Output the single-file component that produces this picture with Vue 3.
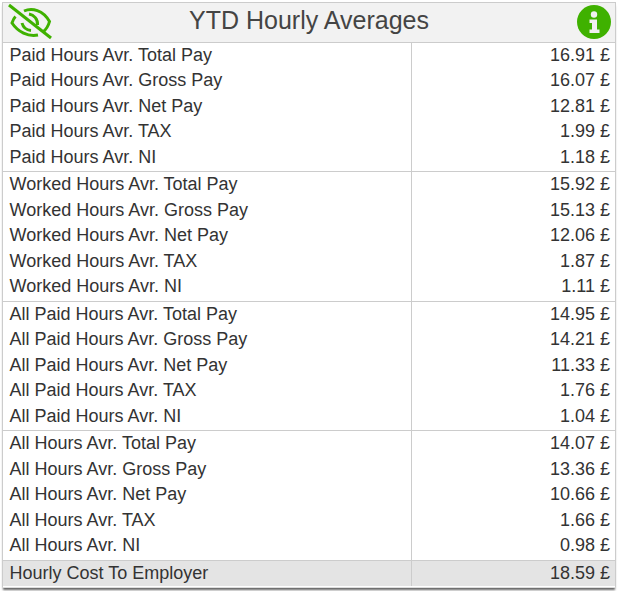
<script setup>
const groups = [
  { name: 'Paid Hours', values: ['16.91', '16.07', '12.81', '1.99', '1.18'] },
  { name: 'Worked Hours', values: ['15.92', '15.13', '12.06', '1.87', '1.11'] },
  { name: 'All Paid Hours', values: ['14.95', '14.21', '11.33', '1.76', '1.04'] },
  { name: 'All Hours', values: ['14.07', '13.36', '10.66', '1.66', '0.98'] },
]
const kinds = ['Total Pay', 'Gross Pay', 'Net Pay', 'TAX', 'NI']
</script>

<template>
  <div class="page">
    <section class="card">
      <header class="head">
        <svg class="eye" viewBox="6 4 48 38" width="48" height="38" aria-hidden="true">
          <g fill="none" stroke="#3fb100" stroke-width="3" stroke-linecap="butt">
            <path d="M24 12C32 8.500 43 11 49.500 22.500C48.500 26.500 46.500 30 43 33"/>
            <path d="M15.500 17.500C14 19 13 21 12 24C18 33 28 38 38 36"/>
            <path d="M29 15C34 16 38 20 37.500 26"/>
            <path d="M22 24C23 28 26 31 31 31.500"/>
            <path d="M9 6L51 39"/>
          </g>
        </svg>
        <h1 class="title">YTD Hourly Averages</h1>
        <svg class="info" viewBox="0 0 34 34" width="34" height="34" aria-hidden="true">
          <circle cx="17" cy="17" r="17" fill="#3fb100"/>
          <circle cx="17" cy="9.500" r="3.200" fill="#f0f0f0"/>
          <path fill="#f0f0f0" d="M12.500 14.500h7.500v10h2.500v3.500h-10v-3.500h2.500v-6.500h-2.500z"/>
        </svg>
      </header>
      <div v-for="g in groups" :key="g.name" class="group">
        <div v-for="(k, i) in kinds" :key="k" class="row">
          <span class="label">{{ g.name }} Avr. {{ k }}</span>
          <span class="value">{{ g.values[i] }} £</span>
        </div>
      </div>
      <div class="row total">
        <span class="label">Hourly Cost To Employer</span>
        <span class="value">18.59 £</span>
      </div>
    </section>
  </div>
</template>

<style>
html, body { margin: 0; background: #fff; }
</style>

<style scoped>
.page {
  width: 618px;
  height: 591px;
  padding: 2px;
  box-sizing: border-box;
  font-family: "Liberation Sans", Arial, sans-serif;
  color: #333;
}
.card {
  width: 614px;
  border: 1px solid #ccc;
  border-bottom-color: #ddd;
  box-sizing: border-box;
  padding-bottom: 1px;
  box-shadow: 0 3px 2px -1px #666;
  background: #fff;
}
.head {
  height: 39.95px;
  box-sizing: border-box;
  border-bottom: 1px solid #ccc;
  background: #f2f2f2;
  display: grid;
  grid-template-columns: 1fr auto 1fr;
  align-items: center;
  padding: 0 4px 0 3px;
}
.eye { justify-self: start; }
.title {
  margin: 0;
  padding: 0 0 3px 1px;
  font-size: 25px;
  font-weight: 400;
  color: #444;
}
.info { justify-self: end; }
.group {
  border-bottom: 1px solid #ccc;
}
.row {
  display: grid;
  grid-template-columns: 409px 1fr;
  height: 25.5px;
  line-height: 25px;
  font-size: 18px;
}
.group .row:last-child {
  height: 26.5px;
}
.label {
  padding-left: 6.5px;
  border-right: 1px solid #ccc;
}
.value {
  text-align: right;
  padding-right: 5px;
}
.total {
  background: #e4e4e4;
  height: 25px;
}
</style>
